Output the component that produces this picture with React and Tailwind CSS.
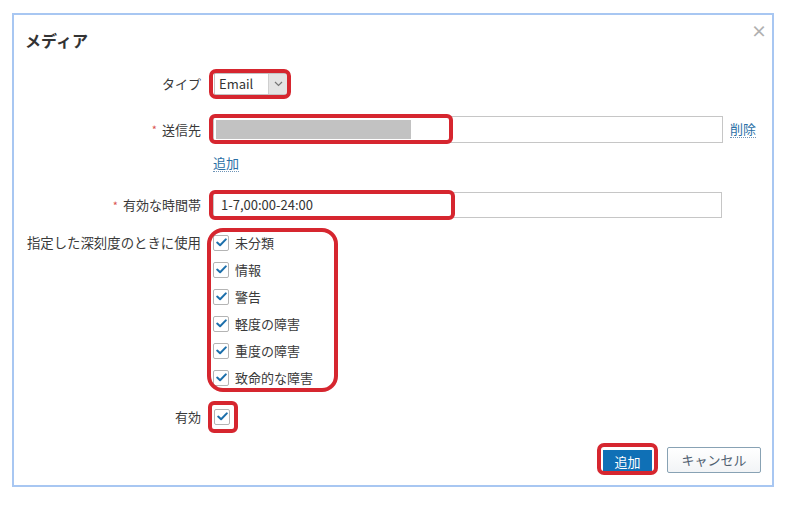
import React from 'react'

const FONT = { fontFamily: '"Noto Sans CJK JP", "Noto Sans", sans-serif' }

function RedMark({ className }) {
  return (
    <div className={`pointer-events-none absolute border-[4px] border-[#d6262f] ${className}`} />
  )
}

function Check({ className = '' }) {
  return (
    <span className={`flex h-[16px] w-[16px] items-center justify-center rounded-[2px] border border-[#b4b4b4] bg-white ${className}`}>
      <svg width="11" height="9" viewBox="0 0 11 9" fill="none">
        <path d="M1.2 4.6 L4.1 7.3 L9.8 1.4" stroke="#1c6fab" strokeWidth="2" strokeLinecap="round" strokeLinejoin="round" />
      </svg>
    </span>
  )
}

function Label({ children, required }) {
  return (
    <div className="flex items-center justify-end text-[13px] text-[#3a3a3a]">
      {required && <span className="mr-[5px] text-[11px] text-[#d9534f]">*</span>}
      {children}
    </div>
  )
}

const levels = ['未分類', '情報', '警告', '軽度の障害', '重度の障害', '致命的な障害']

export default function App() {
  return (
    <div className="h-[506px] w-[787px] bg-white pl-[12px] pt-[13px]" style={FONT}>
      <div className="flex h-[474px] w-[762px] flex-col border-2 border-[#a8c7f2] bg-white">
        {/* header */}
        <div className="flex items-start justify-between pl-[11px] pr-[5px] pt-[15px]">
          <h1 className="text-[16px] font-bold leading-[20px] text-[#333]">メディア</h1>
          <span className="mt-[-9px] text-[16px] font-bold leading-[18px] text-[#b0b0b0]">×</span>
        </div>

        {/* form */}
        <div className="grid grid-cols-[176px_1fr] gap-x-[12px] pl-[11px] pr-[16px]">
          {/* type */}
          <div className="mt-[23px] flex h-[22px] items-center justify-end text-[13px] text-[#3a3a3a]">タイプ</div>
          <div className="mt-[23px] flex">
            <div className="relative">
              <div className="ml-[1px] flex h-[22px] w-[74px] items-center border border-[#c4c4c4] bg-white">
                <span className="flex-1 pl-[4px] text-[13px] text-[#333]">Email</span>
                <span className="flex h-full w-[19px] items-center justify-center border-l border-[#cfcfcf] bg-[#e4e4e4]">
                  <svg width="9" height="6" viewBox="0 0 9 6" fill="none">
                    <path d="M1 1 L4.5 4.5 L8 1" stroke="#777" strokeWidth="1.2" />
                  </svg>
                </span>
              </div>
              <RedMark className="-left-[4px] -top-[4px] h-[30px] w-[82px] rounded-[7px]" />
            </div>
          </div>

          {/* sendto */}
          <div className="mt-[21px] flex h-[27px] items-center justify-end text-[13px] text-[#3a3a3a]">
            <span className="mr-[5px] text-[11px] text-[#d9534f]">*</span>送信先
          </div>
          <div className="mt-[21px] flex items-center">
            <div className="relative flex-1">
              <div className="flex h-[27px] items-center border border-[#c6c6c6] bg-white pl-[2px]">
                <div className="h-[19px] w-[195px] bg-[#c2c2c2]" />
              </div>
              <RedMark className="-left-[4px] -top-[2px] h-[30px] w-[244px] rounded-[6px]" />
            </div>
            <span className="ml-[7px] border-b border-dotted border-[#6f95b8] text-[13px] leading-[16px] text-[#2a6fa6]">削除</span>
          </div>

          {/* add link */}
          <div />
          <div className="mt-[12px] flex">
            <span className="border-b border-dotted border-[#6f95b8] text-[13px] leading-[16px] text-[#2a6fa6]">追加</span>
          </div>

          {/* time period */}
          <div className="mt-[20px]">
            <Label required>
              <span className="leading-[26px]">有効な時間帯</span>
            </Label>
          </div>
          <div className="mt-[20px] flex">
            <div className="relative mr-[34px] flex-1">
              <div className="flex h-[26px] items-center border border-[#c6c6c6] bg-white pl-[7px] text-[13px] text-[#333]">
                1-7,00:00-24:00
              </div>
              <RedMark className="-left-[4px] -top-[2px] h-[30px] w-[246px] rounded-[6px]" />
            </div>
          </div>

          {/* severities */}
          <div className="mt-[11px] flex h-[27px] items-center justify-end whitespace-nowrap text-[13.4px] text-[#3a3a3a]">
            指定した深刻度のときに使用
          </div>
          <div className="mt-[11px] flex">
            <div className="relative flex flex-col">
              {levels.map((lv) => (
                <div key={lv} className="flex h-[27px] items-center">
                  <Check />
                  <span className="ml-[6px] text-[13px] text-[#3a3a3a]">{lv}</span>
                </div>
              ))}
              <RedMark className="-left-[6px] -top-[1px] h-[164px] w-[131px] rounded-[16px]" />
            </div>
          </div>

          {/* enabled */}
          <div className="mt-[12px] flex h-[27px] items-center justify-end text-[13px] text-[#3a3a3a]">有効</div>
          <div className="mt-[12px] flex h-[27px] items-center">
            <div className="relative">
              <Check className="ml-[1px]" />
              <RedMark className="-left-[5px] -top-[8px] h-[32px] w-[30px] rounded-[6px]" />
            </div>
          </div>
        </div>

        {/* footer */}
        <div className="mt-auto flex justify-end gap-[15px] pb-[12px] pr-[11px]">
          <div className="relative mt-[1px]">
            <button className="h-[23px] w-[49px] bg-[#0f70b6] text-[13px] text-white">追加</button>
            <RedMark className="-left-[6px] -top-[5px] h-[32px] w-[61px] rounded-[7px]" />
          </div>
          <button className="h-[26px] w-[94px] rounded-[2px] border border-[#88a2b4] bg-gradient-to-b from-white to-[#f2f4f6] text-[13px] text-[#4f6070]">
            キャンセル
          </button>
        </div>
      </div>
    </div>
  )
}
